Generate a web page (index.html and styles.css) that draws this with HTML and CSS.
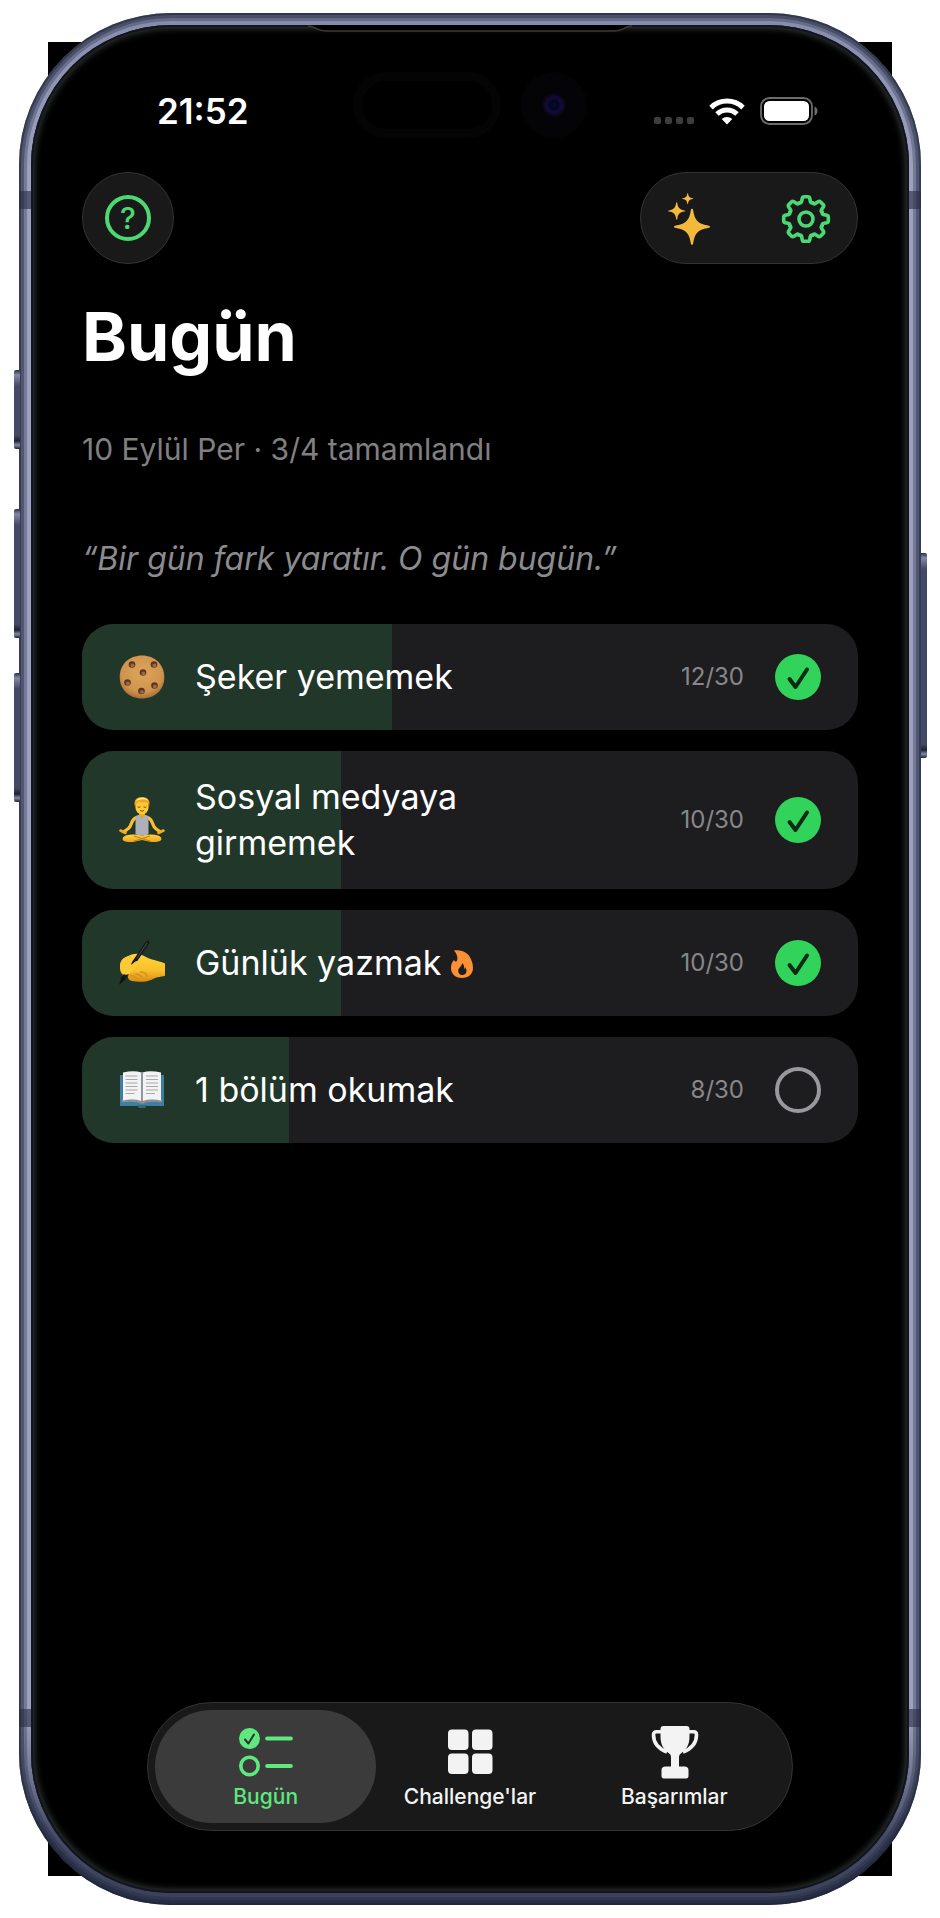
FILE: index.html
```html
<!DOCTYPE html>
<html lang="tr">
<head>
<meta charset="utf-8">
<meta name="viewport" content="width=device-width, initial-scale=1">
<title>Bugün</title>
<link rel="stylesheet" href="styles.css">
</head>
<body>
<div class="stage">
  <div class="phone">
    <span class="side-key key-action"></span>
    <span class="side-key key-up"></span>
    <span class="side-key key-down"></span>
    <span class="side-key key-power"></span>
    <span class="band band-top"></span>
    <span class="band band-bottom"></span>
    <div class="screen">
      <svg class="earpiece" viewBox="0 0 324 8" aria-hidden="true">
        <path d="M0 0C7 0 9 5.500 18 5.500H306C315 5.500 317 0 324 0Z" fill="#000"/>
        <path d="M0 1C7 1 9 6 18 6H306C315 6 317 1 324 1" fill="none" stroke="#3c3a38" stroke-width="1.400"/>
      </svg>
      <div class="status-bar">
        <time class="clock">21:52</time>
        <div class="island"><span class="sensor"></span><span class="camera"></span></div>
        <div class="indicators">
          <span class="signal"><i></i><i></i><i></i><i></i></span>
          <svg class="wifi" viewBox="0 0 36 27" aria-label="Wi-Fi">
            <g fill="none" stroke="#fff" stroke-width="5">
              <path d="M2 9.600a23 23 0 0 1 32 0"/>
              <path d="M8 16a14.400 14.400 0 0 1 20 0"/>
            </g>
            <path d="M18 26.500l-5.300-5.400a7.600 7.600 0 0 1 10.600 0z" fill="#fff"/>
          </svg>
          <svg class="battery" viewBox="0 0 58 28" aria-label="Pil">
            <rect x="1" y="1" width="51" height="26" rx="8.500" fill="none" stroke="#6c6c6c" stroke-width="1.800"/>
            <rect x="4" y="4" width="45" height="20" rx="5.500" fill="#fff"/>
            <path d="M54.500 9.500c4 1.500 4 7.500 0 9z" fill="#6c6c6c"/>
          </svg>
        </div>
      </div>

      <header class="toolbar">
        <button class="glass help" type="button" aria-label="Yardım"><span class="help-mark">?</span></button>
        <div class="glass actions">
          <button class="tool" type="button" aria-label="Öneriler">
            <svg width="42" height="52" viewBox="0 0 42 52" fill="#f2b93b">
              <defs><path id="star" d="M0-18C.8-18 1-17.300 1.200-16.500C2.600-7 5.500-3 16-1.300C17.300-1.100 18-.8 18 0S17.300 1.100 16 1.300C5.500 3 2.600 7 1.200 16.500C1 17.300.8 18 0 18S-1 17.300-1.200 16.500C-2.600 7-5.500 3-16 1.300C-17.300 1.100-18 .8-18 0S-17.300-1.100-16-1.300C-5.500-3-2.600-7-1.200-16.500C-1-17.300-.8-18 0-18Z"/></defs>
              <use href="#star" transform="translate(24 33.700)"/>
              <use href="#star" transform="translate(8.700 18) scale(.48)"/>
              <use href="#star" transform="translate(19.700 5.700) scale(.31)"/>
            </svg>
          </button>
          <button class="tool" type="button" aria-label="Ayarlar">
            <svg width="50" height="50" viewBox="-25 -25 50 50" fill="none" stroke="#4cd974" stroke-width="3.600" stroke-linecap="round" stroke-linejoin="round">
              <defs><path id="tooth" d="M-6.700-16.200C-5-16-4.500-16.800-4.300-18L-3.700-20.800Q-3.400-22.300-2-22.300H2Q3.400-22.300 3.700-20.800L4.300-18C4.500-16.800 5-16 6.700-16.200"/></defs>
              <use href="#tooth"/><use href="#tooth" transform="rotate(45)"/><use href="#tooth" transform="rotate(90)"/><use href="#tooth" transform="rotate(135)"/><use href="#tooth" transform="rotate(180)"/><use href="#tooth" transform="rotate(225)"/><use href="#tooth" transform="rotate(270)"/><use href="#tooth" transform="rotate(315)"/>
              <circle r="7"/>
            </svg>
          </button>
        </div>
      </header>

      <main class="content">
        <h1 class="title">Bugün</h1>
        <p class="summary">10 Eylül Per · 3/4 tamamlandı</p>
        <p class="quote">“Bir gün fark yaratır. O gün bugün.”</p>

        <ul class="habits">
          <li class="habit">
            <span class="progress" style="width:40%"></span>
            <svg class="emoji" viewBox="0 0 46 46" aria-hidden="true">
              <defs><radialGradient id="dough" cx=".5" cy=".4" r=".65"><stop offset="0" stop-color="#dca55c"/><stop offset=".7" stop-color="#cf944d"/><stop offset="1" stop-color="#9b6530"/></radialGradient>
              <g id="chip"><circle r="3.300" fill="#5a3521"/><circle cx=".4" cy=".9" r="1.900" fill="#9a6a45"/></g></defs>
              <path d="M23 1.500c13 0 22 9 22.300 21.500C45.600 35.500 36 44.500 23 44.500S.7 35.500.7 23 10 1.500 23 1.500z" fill="url(#dough)"/>
              <use href="#chip" x="13" y="10.500"/><use href="#chip" x="35" y="10.500"/><use href="#chip" x="24" y="18.500"/><use href="#chip" x="8.500" y="28.500"/><use href="#chip" x="35.500" y="31.500"/><use href="#chip" x="22.500" y="37"/>
            </svg>
            <label class="name" for="h1">Şeker yememek</label>
            <span class="count">12/30</span>
            <span class="tick"><input id="h1" type="checkbox" checked><svg viewBox="0 0 46 46"><path d="M14.500 25l6 8L32 15.500"/></svg></span>
          </li>
          <li class="habit">
            <span class="progress" style="width:33.333%"></span>
            <svg class="emoji" viewBox="0 0 46 46" aria-hidden="true">
              <defs><linearGradient id="skin" x2="0" y2="1"><stop offset="0" stop-color="#ffd23c"/><stop offset="1" stop-color="#eda61c"/></linearGradient></defs>
              <path d="M17.500 20.500c-4 1-4 4-6 8-1 3-4 4.500-6.500 6M28.500 20.500c4 1 4 4 6 8 1 3 4 4.500 6.500 6" fill="none" stroke="#fbc02d" stroke-width="3.200" stroke-linecap="round"/>
              <path d="M1.500 33.500l5 2.500M44.500 33.500l-5 2.500" stroke="#f0aa22" stroke-width="2.600" stroke-linecap="round"/>
              <path d="M4 40.500c3-3.500 10-3.500 19-2 9-1.500 16-1.500 19 2 2 4-4 5-10 4.500L23 43l-9 2C8 45.500 2 44.500 4 40.500z" fill="url(#skin)"/>
              <path d="M14 44.500l17-5.500M32 44.500L15 39" stroke="#c47c12" stroke-width="1"/>
              <path d="M20 13h6v7h-6z" fill="#eda61c"/>
              <path d="M16.500 19.500c1.500-1.200 2.500-1.500 3.500-1.500 1 3 5 3 6 0 1 0 2 .3 3.500 1.500V37c-4 2-9 2-13 0z" fill="#aeb1ba"/>
              <ellipse cx="23" cy="9.500" rx="6.700" ry="8" fill="#ffc933"/>
              <path d="M15.800 9C14.500 3 18 0 23 0s8.800 3 7.200 9L28.500 5c-4 1-7 .5-9-.5z" fill="#f2a71e"/>
              <path d="M17 4c2-4 10-4.500 12-.5-4-2-8-1.500-12 .5z" fill="#fff0a0"/>
              <path d="M18.500 9.800q1.500 1.200 3 0M24.500 9.800q1.500 1.200 3 0M21 13.500q2 1.300 4 0" fill="none" stroke="#7b5218" stroke-width="1"/>
            </svg>
            <label class="name" for="h2">Sosyal medyaya girmemek</label>
            <span class="count">10/30</span>
            <span class="tick"><input id="h2" type="checkbox" checked><svg viewBox="0 0 46 46"><path d="M14.500 25l6 8L32 15.500"/></svg></span>
          </li>
          <li class="habit">
            <span class="progress" style="width:33.333%"></span>
            <svg class="emoji" viewBox="0 0 46 46" aria-hidden="true">
              <defs><linearGradient id="hand" x2="0" y2="1"><stop offset="0" stop-color="#ffd53f"/><stop offset=".6" stop-color="#f9bf2b"/><stop offset="1" stop-color="#d98a12"/></linearGradient></defs>
              <path d="M1 27c0-6 2-8 6-10 5-3 10-4 14-3l6 3c5 3 11 3 19 6.500l.5 12C42 37 36 37 32 40c-6 2.500-14 2-19 1-4-1-5-4-3-7-4 2-9 2-9-7z" fill="url(#hand)"/>
              <path d="M11 36c3-1 5 0 7 2m-2-4c4 0 6 1 7 4m-2-6c5 0 7 2 7 5" fill="none" stroke="#d9901a" stroke-width="1.300"/>
              <path d="M28.500 2.500L4.500 38" stroke="#17191b" stroke-width="4" stroke-linecap="round"/>
              <path d="M28 3L18 18" stroke="#4b5052" stroke-width="1"/>
              <path d="M3 36.500L0 45l6.500-6z" fill="#111"/>
              <path d="M1 25c1-5 4-8 9-9 3 0 4 2 3 5l-1 4 5-4c3 0 4 3 2 5-3 3-7 5-9 8-4 2-9 0-9-9z" fill="#fdc934"/>
            </svg>
            <label class="name" for="h3">Günlük yazmak
              <svg class="flame" viewBox="0 0 22 28" aria-hidden="true"><path fill="#fd9034" fill-rule="evenodd" d="M3 .6C11-.8 18 3 20.500 10.500 21.600 13 22 15.500 22 18c0 6-4.500 10-11 10S0 24 0 18c0-4 1.500-6.500 3-8 .5 1.200 1.200 1.500 2.500 1.500C7.500 8.500 6 4 3 .6zM11 13c.5 3-3.800 4.500-3.800 8 0 2.300 1.600 4 4 4s4.300-1.600 4.300-4c0-1.500-.5-2.800-1.300-3.700-.1 1-.4 1.500-1 1.900.3-2.700-.4-4.700-2.200-6.200z"/></svg></label>
            <span class="count">10/30</span>
            <span class="tick"><input id="h3" type="checkbox" checked><svg viewBox="0 0 46 46"><path d="M14.500 25l6 8L32 15.500"/></svg></span>
          </li>
          <li class="habit">
            <span class="progress" style="width:26.667%"></span>
            <svg class="emoji" viewBox="0 0 46 46" aria-hidden="true">
              <path d="M1 8h44v31H1z" fill="#3c7fa3"/>
              <path d="M18 38h10l-2 3h-6z" fill="#2d6d74"/>
              <path d="M3 35.500q12-2 20 1.500 8-3.500 20-1.500v-3H3z" fill="#8c9096"/>
              <path d="M4 5.500q11-2.500 18.500 0V34Q14 31.500 4 33.500zM42 5.500q-11-2.500-18.500 0V34Q32 31.500 42 33.500z" fill="#f3f3f4"/>
              <path d="M22.900 5v30" stroke="#8f9296" stroke-width="1.800"/>
              <path d="M6.500 9h12m-12 3.500h12m-12 3.500h12m-12 3.500h12m-12 3.500h12m-12 3.500h9M27 9h12m-12 3.500h12m-12 3.500h12m-12 3.500h12m-12 3.500h12m-12 3.500h9" stroke="#a9a9ad" stroke-width="1.200"/>
            </svg>
            <label class="name" for="h4">1 bölüm okumak</label>
            <span class="count">8/30</span>
            <span class="tick"><input id="h4" type="checkbox"></span>
          </li>
        </ul>
      </main>

      <nav class="tabs">
        <a class="tab active" href="#today" aria-current="page">
          <svg width="54" height="54" viewBox="0 0 54 54" fill="none" stroke="#5ee87e">
            <circle cx="10.500" cy="13.500" r="10.500" fill="#5ee87e" stroke="none"/>
            <path d="M6 14.500l3.400 4L15 9.500" stroke="#303431" stroke-width="2" stroke-linecap="round" stroke-linejoin="round"/>
            <circle cx="10.500" cy="41" r="8.700" stroke-width="3.600"/>
            <path d="M28.200 13.500h23.600M28.200 41h23.600" stroke-width="4.200" stroke-linecap="round"/>
          </svg>
          <span>Bugün</span>
        </a>
        <a class="tab" href="#challenges">
          <svg width="54" height="54" viewBox="0 0 54 54" fill="#f3f3f3">
            <rect x="5" y="4.500" width="20.500" height="20.500" rx="4"/><rect x="29" y="4.500" width="20.500" height="20.500" rx="4"/><rect x="5" y="28.500" width="20.500" height="20.500" rx="4"/><rect x="29" y="28.500" width="20.500" height="20.500" rx="4"/>
          </svg>
          <span>Challenge'lar</span>
        </a>
        <a class="tab" href="#achievements">
          <svg width="54" height="54" viewBox="0 0 54 54" fill="#f3f3f3">
            <path d="M16.500 1h23c2 0 3 1.200 3 3v7c0 9-3 13-8 17-2 1.500-2.500 2.500-2.500 4.500v9h5.500c2.500 0 4 1.500 4 3.500V51c0 1.500-.8 2.500-2.500 2.500H17c-1.700 0-2.500-1-2.500-2.500v-6c0-2 1.500-3.500 4-3.500H24v-9c0-2-.5-3-2.500-4.500-5-4-8-8-8-17V4c0-1.800 1-3 3-3z"/>
            <path d="M14 6.800H9.500c-2 0-3 .8-3 3C6.500 18 12 24 20 27M42 6.800h4.500c2 0 3 .8 3 3C49.500 18 44 24 36 27" fill="none" stroke="#f3f3f3" stroke-width="3.600"/>
          </svg>
          <span>Başarımlar</span>
        </a>
      </nav>
    </div>
  </div>
</div>
</body>
</html>
```

FILE: styles.css
```css
* { box-sizing: border-box; }

body {
  margin: 0;
  background: #fff;
  font-family: Inter, "Liberation Sans", sans-serif;
  color: #fff;
}

button { font: inherit; color: inherit; border: 0; padding: 0; background: none; cursor: pointer; }
svg { display: block; }

.stage {
  min-height: 100vh;
  padding: 13px 19px;
  display: flex;
  background: linear-gradient(#000, #000) center / calc(100% - 96px) calc(100% - 84px) no-repeat #fff;
}

/* Device body: metal rim around the display */
.phone {
  position: relative;
  flex: 1;
  display: flex;
  padding: 12px;
  border-radius: 152px;
  background: linear-gradient(#858bab 0, #9da1c0 160px, #9da1c0 calc(100% - 190px), #454b66 calc(100% - 70px), #3a4058 100%);
  box-shadow:
    inset 0 0 0 2px rgba(28, 34, 54, .5),
    inset 0 0 0 5px rgba(28, 34, 54, .4),
    inset 0 0 0 8px rgba(28, 34, 54, .3);
}

.side-key {
  position: absolute;
  left: -5px;
  width: 6px;
  border-radius: 2px 0 0 2px;
  background: linear-gradient(#2a3044 0, #8389a6 5px, #434a64 16px, #434a64 calc(100% - 14px), #1d2333 calc(100% - 8px), #8389a6 calc(100% - 4px), #1d2333 100%);
}
.key-action { top: 357px; height: 79px; }
.key-up { top: 496px; height: 129px; }
.key-down { top: 660px; height: 129px; }
.key-power { left: auto; right: -6px; top: 540px; height: 205px; border-radius: 0 2px 2px 0; }

.band {
  position: absolute;
  left: 0;
  right: 0;
  height: 18px;
  background: rgba(40, 44, 68, .6);
}
.band-top { top: 178px; }
.band-bottom { bottom: 178px; }

.screen {
  position: relative;
  flex: 1;
  min-width: 0;
  display: flex;
  flex-direction: column;
  padding: 46px 51px 62px;
  border-radius: 140px;
  background: #000;
  box-shadow: inset 0 0 0 2px #10151f, inset 0 0 7px 3px #3a3e3e;
}

.earpiece {
  position: absolute;
  top: 0;
  left: 50%;
  width: 324px;
  height: 8px;
  margin-left: -162px;
}

.status-bar {
  display: grid;
  grid-template-columns: 1fr auto 1fr;
  align-items: center;
  height: 68px;
  margin-bottom: 33px;
}
.clock {
  justify-self: start;
  margin-left: 75px;
  padding-top: 12px;
  font-size: 35px;
  line-height: 40px;
  font-weight: 600;
}
.island { display: flex; align-items: center; gap: 20px; }
.sensor { width: 148px; height: 66px; border: 9px solid #040404; border-radius: 33px; }
.camera {
  width: 66px;
  height: 66px;
  border-radius: 50%;
  background: radial-gradient(circle, #080830 0 2px, #04041a 4px, #0d0d3a 7px, #12082a 9px, #040408 12px, #030303 100%);
}
.indicators { justify-self: end; display: flex; align-items: flex-end; gap: 15px; margin-right: 40px; padding-top: 12px; }
.signal { display: flex; gap: 4px; padding-bottom: 1px; }
.signal i { width: 7px; height: 7px; border-radius: 2px; background: #3d3d3d; }
.wifi { width: 36px; height: 27px; }
.battery { width: 58px; height: 28px; }

.toolbar { display: flex; justify-content: space-between; }
.glass {
  height: 92px;
  border-radius: 46px;
  background: #191919;
  border: 1px solid #333;
}
.help { width: 92px; display: grid; place-items: center; }
.help-mark {
  width: 46px;
  height: 46px;
  border: 4px solid #4cd974;
  border-radius: 50%;
  color: #4cd974;
  font-size: 30px;
  line-height: 38px;
  font-weight: 500;
  text-align: center;
}
.actions { width: 218px; display: flex; justify-content: space-between; padding: 2px 26px 0 27px; }
.tool { display: grid; place-items: center; }

.content { flex: 1; }
.title { margin: 30px 0 0; font-size: 68px; line-height: 84px; font-weight: 700; }
.summary { margin: 51px 0 0; font-size: 30px; line-height: 40px; color: #808082; }
.quote { margin: 70px 0 0; font-size: 32px; line-height: 40px; font-style: italic; color: #8c8c8e; }

.habits {
  list-style: none;
  margin: 45px 0 0;
  padding: 0;
  display: flex;
  flex-direction: column;
  gap: 21px;
}
.habit {
  position: relative;
  display: flex;
  align-items: center;
  padding: 23px 37px;
  min-height: 106px;
  border-radius: 32px;
  overflow: hidden;
  background: #1d1d1f;
}
.habit > * { position: relative; }
.habit > .progress { position: absolute; top: 0; bottom: 0; left: 0; background: #21372a; }
.emoji { flex: none; width: 46px; height: 46px; }
.name { max-width: 350px; margin-left: 30px; font-size: 34px; line-height: 46px; }
.flame { display: inline-block; width: 22px; height: 28px; vertical-align: -3px; }
.count { margin-left: auto; font-size: 24px; line-height: 32px; color: #88888b; }

.tick { width: 46px; height: 46px; margin-left: 31px; display: grid; }
.tick > * { grid-area: 1 / 1; }
.tick input {
  appearance: none;
  width: 46px;
  height: 46px;
  margin: 0;
  border: 4px solid #98989d;
  border-radius: 50%;
}
.tick input:checked { border: 0; background: #32d35b; }
.tick svg {
  width: 46px;
  height: 46px;
  pointer-events: none;
  fill: none;
  stroke: #0c2a14;
  stroke-width: 4;
  stroke-linecap: round;
  stroke-linejoin: round;
}

.tabs {
  align-self: center;
  width: 100%;
  max-width: 646px;
  display: flex;
  padding: 7px;
  border: 1px solid #333;
  border-radius: 65px;
  background: #191919;
}
.tab {
  flex: 1;
  display: flex;
  flex-direction: column;
  align-items: center;
  gap: 5px;
  padding: 15px 0 13px;
  border-radius: 57px;
  color: #f3f3f3;
  font-size: 21px;
  line-height: 26px;
  font-weight: 500;
  text-decoration: none;
}
.tab + .tab { margin-left: -17px; }
.tab.active { background: #3b3b3b; color: #5ee87e; }
```
